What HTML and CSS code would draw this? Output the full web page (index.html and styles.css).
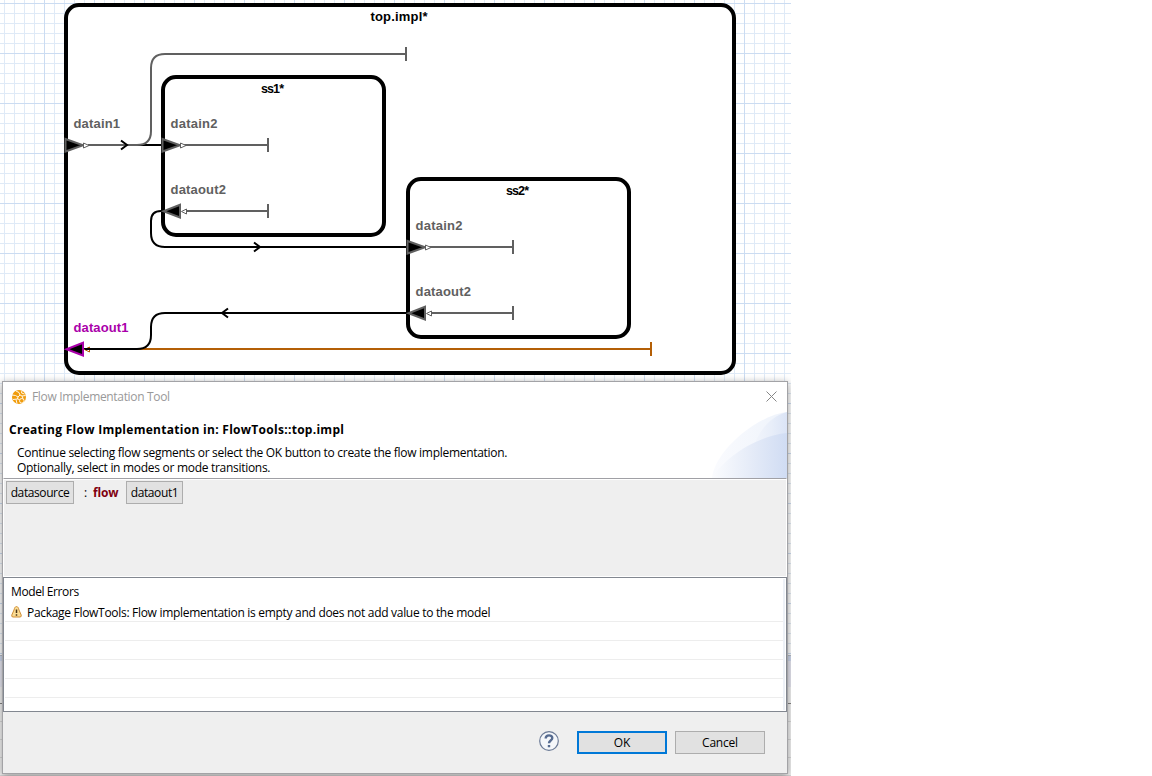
FILE: index.html
```html
<!DOCTYPE html>
<html lang="en">
<head>
<meta charset="utf-8">
<title>Flow Implementation Tool</title>
<link rel="stylesheet" href="styles.css">
</head>
<body>
<main class="workspace">
  <section class="canvas">
    <svg class="diagram" width="791" height="380" viewBox="0 0 791 380">
      <g class="box">
        <rect x="66" y="5" width="668" height="368" rx="13"/>
        <rect x="163" y="77" width="221" height="158" rx="13"/>
        <rect x="408" y="179" width="221" height="158" rx="13"/>
      </g>
      <g class="wire black">
        <path d="M136 145H163"/>
        <path d="M163 211H161Q151 211 151 221V233Q151 247 165 247H408"/>
      </g>
      <g class="wire gray">
        <path d="M88 145H137Q151 145 151 131V68Q151 54 165 54H406M406 47V61"/>
        <path d="M184 145H268M268 138V152M186 211H268M268 204V218"/>
        <path d="M429 247H513M513 240V254M431 313H513M513 306V320"/>
      </g>
      <path class="wire orange" d="M88 349H651M651 342V356"/>
      <path class="wire black" d="M408 313H165Q151 313 151 327V335Q151 349 137 349H84"/>
      <g class="wire black">
        <path d="M121 140.500L127 145L121 149.500M254 242.500L260 247L254 251.500M228 308.500L222 313L228 317.500"/>
      </g>
      <g class="port">
        <path d="M65.500 139V151.500L83 145.300Z"/>
        <path d="M162.500 139V151.500L180 145.300Z"/>
        <path d="M407.500 241V253.500L425 247.300Z"/>
        <path d="M180 204.800V217.500L163.500 211.200Z"/>
        <path d="M425 306.800V319.500L408.500 313.200Z"/>
        <path class="selected" d="M83 342.800V355.500L66.500 349.200Z"/>
      </g>
      <g class="tip">
        <path d="M83.500 143V148L89 145.500ZM180.500 143V148L186 145.500ZM425.500 245V250L431 247.500Z"/>
        <path d="M186.500 209V214L181.500 211.500ZM431.500 311V316L426.500 313.500Z"/>
        <path class="tip-orange" d="M89.500 347V352L84.500 349.500Z"/>
      </g>
      <path class="wire black" d="M85 349H92"/>
      <g class="title">
        <text x="370.500" y="21" textLength="57">top.impl*</text>
        <text class="title-sub" x="261" y="93" textLength="23">ss1*</text>
        <text class="title-sub" x="506" y="195" textLength="23">ss2*</text>
      </g>
      <g class="label">
        <text x="73.500" y="128" textLength="46.500">datain1</text>
        <text x="170.500" y="128" textLength="47">datain2</text>
        <text x="170.500" y="194" textLength="55.500">dataout2</text>
        <text x="415.500" y="230" textLength="47">datain2</text>
        <text x="415.500" y="296" textLength="55.500">dataout2</text>
        <text class="label-selected" x="73.500" y="332" textLength="55">dataout1</text>
      </g>
    </svg>
  </section>
  <div class="status-panel">
    <div class="status-tab"></div>
    <div class="status-bar"></div>
    <div class="status-body"></div>
    <div class="status-rows"></div>
  </div>

  <section class="dialog">
    <header class="head">
      <svg class="swoosh" width="75" height="66" viewBox="0 0 75 66">
        <defs>
          <linearGradient id="fade"><stop offset="0" stop-color="#f3f6fc"/><stop offset=".55" stop-color="#e8eef9"/><stop offset="1" stop-color="#dbe4f6"/></linearGradient>
          <linearGradient id="deep"><stop offset="0" stop-color="#fbfcfe"/><stop offset=".5" stop-color="#e6ecf8"/><stop offset="1" stop-color="#d0dcf3"/></linearGradient>
          <linearGradient id="pale"><stop offset="0" stop-color="#fafbfe"/><stop offset="1" stop-color="#eef3fb"/></linearGradient>
        </defs>
        <path fill="url(#pale)" d="M0 66C3 38 46 3 75 0V66Z"/>
        <path fill="url(#fade)" d="M40 40C46 18 58 5 75 0V40Z"/>
        <path fill="url(#deep)" d="M0 66C12 46 44 24 75 21V66Z"/>
      </svg>
      <div class="titlebar">
        <svg class="logo" width="14" height="14" viewBox="0 0 14 14">
          <circle cx="7" cy="7" r="7" fill="#f09c0c"/>
          <g fill="none" stroke="#fff" stroke-width=".9"><path d="M0 5L3.500 5.500L6 7L8 5L7 2.500L4 1M6 7L5.500 9L1 9.500M5.500 9L7.500 9.500M8 5L10 6L13.500 5.500M10 6L11 8.500M4 9.500L5 13.500M10 .5L9.500 3L12.500 4"/><circle cx="9.800" cy="10.800" r="2.300"/></g>
        </svg>
        <span class="caption">Flow Implementation Tool</span>
        <svg class="close" width="11" height="11" viewBox="0 0 11 11"><path d="M.5.5L10.500 10.500M10.500.5L.5 10.500"/></svg>
      </div>
      <h1 class="heading">Creating Flow Implementation in: FlowTools::top.impl</h1>
      <p class="hint">Continue selecting flow segments or select the OK button to create the flow implementation.<br>Optionally, select in modes or mode transitions.</p>
    </header>
    <div class="flow">
      <span class="segment source">datasource</span>
      <span class="colon">:</span>
      <b class="keyword">flow</b>
      <span class="segment target">dataout1</span>
    </div>
    <div class="errors">
      <div class="errors-list">
        <div class="errors-title">Model Errors</div>
        <div class="row">
          <svg class="warning" width="11" height="12" viewBox="0 0 11 12"><path d="M5.500.6C7 .6 7.500 2 8 4L10.200 9Q10.700 11 9 11H2Q.3 11 .8 9L3 4C3.500 2 4 .6 5.500.6Z" fill="#fbdc93" stroke="#cf8e36"/><path d="M5.500 3.500V7M5.500 8.200V9.700" stroke="#4a3518" stroke-width="1.500"/></svg>
          <span class="message">Package FlowTools: Flow implementation is empty and does not add value to the model</span>
        </div>
        <div class="row"></div>
        <div class="row"></div>
        <div class="row"></div>
        <div class="row"></div>
      </div>
    </div>
    <footer class="foot">
      <svg class="help" width="20" height="20" viewBox="0 0 20 20"><circle cx="10" cy="10" r="9.300" fill="#f5f7fa" stroke="#6b7a96" stroke-width="1.200"/><path d="M6.700 7.500C6.700 3.300 13.300 3.400 13.300 7.100C13.300 9.600 10 9.500 10 12.200M10 14V16.300" fill="none" stroke="#566b90" stroke-width="2.400"/></svg>
      <button class="button primary">OK</button>
      <button class="button">Cancel</button>
    </footer>
  </section>
</main>
</body>
</html>
```
FILE: styles.css
```css
* { box-sizing: border-box; }
body { margin: 0; background: #fff; font: 12px/15px "Open Sans", "Noto Sans", sans-serif; color: #000; }
.workspace { position: relative; width: 791px; height: 776px; overflow: hidden; display: flex; flex-direction: column; }
.canvas {
  flex: 0 0 655px;
  background-color: #fff;
  background-image:
    linear-gradient(#cbdcf2 1px, transparent 1px),
    linear-gradient(90deg, #cbdcf2 1px, transparent 1px),
    linear-gradient(#dfeaf7 1px, transparent 1px),
    linear-gradient(90deg, #dfeaf7 1px, transparent 1px);
  background-size: 50px 50px, 50px 50px, 10px 10px, 10px 10px;
  background-position: 0 3px, 44px 0, 0 3px, 4px 0;
}
.diagram { display: block; }
.box rect { fill: #fff; stroke: #000; stroke-width: 4; }
.wire { fill: none; stroke-width: 2; }
.black { stroke: #000; }
.gray { stroke: #606060; }
.orange { stroke: #b45f06; }
.port path { fill: #000; stroke: #606060; stroke-width: 2; }
.port .selected { stroke: #aa00aa; }
.tip path { fill: #fff; stroke: #606060; stroke-width: 1; }
.tip .tip-orange { stroke: #b45f06; }
.title, .label { font-family: "Liberation Sans", Arial, sans-serif; font-weight: bold; font-size: 13px; }
.title-sub { font-size: 12.500px; }
.label { fill: #606060; }
.label-selected { fill: #aa00aa; }

.status-panel { flex: 1; display: flex; flex-direction: column; background: #f4f4f4; }
.status-tab { height: 6px; background: #d0d9ee; border-top: 1px solid #b6bcc6; }
.status-bar { height: 26px; background: #e8e8f2; }
.status-body { height: 17px; border-bottom: 1px solid #858585; background: #f4f4f4; }
.status-rows { flex: 1; background: repeating-linear-gradient(#f4f4f4 0 17px, #dadada 17px 18px); }

.dialog {
  position: absolute; left: 2px; top: 381px; width: 786px; height: 393px;
  display: flex; flex-direction: column;
  background: #efefef; border: 1px solid #a3a3a6;
  box-shadow: 0 2px 8px rgba(0, 0, 0, .4);
}
.head { position: relative; flex: 0 0 96px; background: #fff; }
.swoosh { position: absolute; right: 0; bottom: 0; }
.titlebar { position: relative; display: flex; align-items: center; height: 29px; padding: 0 10px 0 9px; color: #999; }
.caption { margin-left: 6px; flex: 1; letter-spacing: -.33px; }
.close { fill: none; stroke: #868686; }
.heading { margin: 11px 0 0 6px; font-size: 12px; line-height: 15px; font-weight: bold; letter-spacing: .285px; position: relative; }
.hint { position: relative; margin: 8px 0 0 14px; letter-spacing: -.29px; }
.flow { flex: 0 0 99px; display: flex; align-items: flex-start; padding: 2px; border: 1px solid #fff; border-top: 1px solid #a0a0a5; box-shadow: inset 0 1px #fff; }
.segment { height: 23px; line-height: 21px; border: 1px solid #adadad; background: #e1e1e1; text-align: center; white-space: nowrap; letter-spacing: -.4px; }
.source { width: 68px; }
.target { width: 57px; margin-left: 8px; }
.colon { margin: 4px 0 0 10px; width: 9px; }
.keyword { margin-top: 4px; width: 25px; color: #7f0010; letter-spacing: -.2px; }
.errors { flex: 0 0 135px; background: #fff; border: 1px solid #828790; padding: 1px; overflow: hidden; }
.errors-list { height: 131px; padding-top: 5px; border-right: 2px solid #edf1f7; overflow: hidden; }
.errors-title { padding-left: 6px; height: 19px; letter-spacing: -.4px; }
.row { display: flex; height: 19px; border-bottom: 1px solid #ededed; padding-left: 6px; align-items: center; }
.message { margin-left: 5px; white-space: nowrap; letter-spacing: -.3px; }
.foot { flex: 1; display: flex; justify-content: flex-end; align-items: center; gap: 8px; padding-right: 22px; }
.help { margin: 0 10px 3px 0; }
.button { width: 90px; height: 23px; padding: 0; border: 1px solid #adadad; background: #e1e1e1; font: inherit; letter-spacing: -.2px; color: #000; }
.primary { border: 2px solid #0078d7; }
```
